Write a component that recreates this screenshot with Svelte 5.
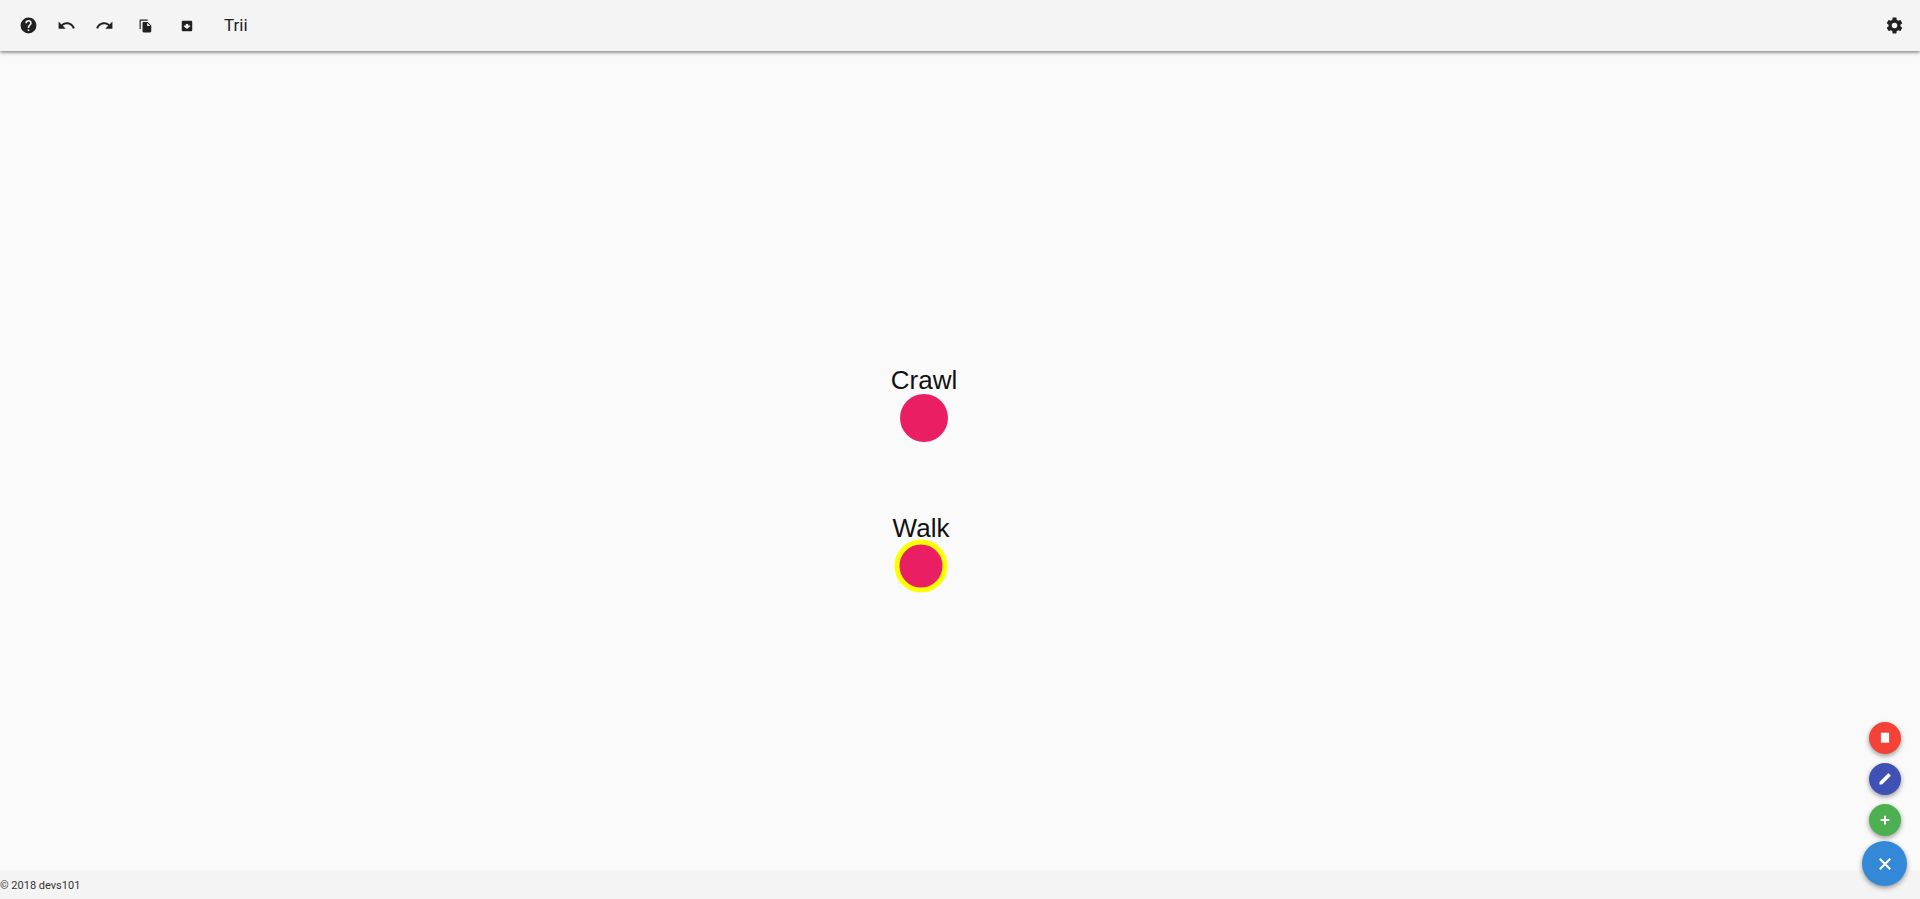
<script>
  const tools = [
    { label: 'Help', size: 19, d: 'M15.07,11.25L14.17,12.17C13.45,12.89 13,13.5 13,15H11V14.5C11,13.39 11.45,12.39 12.17,11.67L13.41,10.41C13.78,10.05 14,9.55 14,9C14,7.89 13.1,7 12,7A2,2 0 0,0 10,9H8A4,4 0 0,1 12,5A4,4 0 0,1 16,9C16,9.88 15.64,10.67 15.07,11.25M13,19H11V17H13M12,2A10,10 0 0,0 2,12A10,10 0 0,0 12,22A10,10 0 0,0 22,12C22,6.47 17.5,2 12,2Z' },
    { label: 'Undo', size: 19, d: 'M12.5,8C9.85,8 7.45,9 5.6,10.6L2,7V16H11L7.38,12.38C8.77,11.22 10.54,10.5 12.5,10.5C16.04,10.5 19.05,12.81 20.1,16L22.47,15.22C21.08,11.03 17.15,8 12.5,8Z' },
    { label: 'Redo', size: 19, d: 'M18.4,10.6C16.55,9 14.15,8 11.5,8C6.85,8 2.92,11.03 1.53,15.22L3.9,16C4.95,12.81 7.96,10.5 11.5,10.5C13.45,10.5 15.23,11.22 16.62,12.38L13,16H22V7L18.4,10.6Z' }
  ];
  const fileTools = [
    { label: 'Copy', size: 14, d: 'M15,1H3C1.9,1 1,1.9 1,3V17H3V3H15V1M15,5H8C6.9,5 6,5.9 6,7V21C6,22.1 6.9,23 8,23H19C20.1,23 21,22.1 21,21V11L15,5M14,12V6.5L19.5,12H14Z' },
    { label: 'Archive', size: 14, d: 'M5,3H19A2,2 0 0,1 21,5V19A2,2 0 0,1 19,21H5A2,2 0 0,1 3,19V5A2,2 0 0,1 5,3M10,8.5V11H6.5V12.5L12,17L17.5,12.5V11H14V8.5H10Z' }
  ];
  const gear = 'M12,15.5A3.5,3.5 0 0,1 8.5,12A3.5,3.5 0 0,1 12,8.5A3.5,3.5 0 0,1 15.5,12A3.5,3.5 0 0,1 12,15.5M19.43,12.97C19.47,12.65 19.5,12.33 19.5,12C19.5,11.67 19.47,11.34 19.43,11L21.54,9.37C21.73,9.22 21.78,8.95 21.66,8.73L19.66,5.27C19.54,5.05 19.27,4.96 19.05,5.05L16.56,6.05C16.04,5.66 15.5,5.32 14.87,5.07L14.5,2.42C14.46,2.18 14.25,2 14,2H10C9.75,2 9.54,2.18 9.5,2.42L9.13,5.07C8.5,5.32 7.96,5.66 7.44,6.05L4.95,5.05C4.73,4.96 4.46,5.05 4.34,5.27L2.34,8.73C2.21,8.95 2.27,9.22 2.46,9.37L4.57,11C4.53,11.34 4.5,11.67 4.5,12C4.5,12.33 4.53,12.65 4.57,12.97L2.46,14.63C2.27,14.78 2.21,15.05 2.34,15.27L4.34,18.73C4.46,18.95 4.73,19.03 4.95,18.95L7.44,17.94C7.96,18.34 8.5,18.68 9.13,18.93L9.5,21.58C9.54,21.82 9.75,22 10,22H14C14.25,22 14.46,21.82 14.5,21.58L14.87,18.93C15.5,18.67 16.04,18.34 16.56,17.94L19.05,18.95C19.27,19.03 19.54,18.95 19.66,18.73L21.66,15.27C21.78,15.05 21.73,14.78 21.54,14.63L19.43,12.97Z';
  const close = 'M20,6L18,4L12,10L6,4L4,6L10,12L4,18L6,20L12,14L18,20L20,18L14,12Z';
  const nodes = [
    { name: 'Crawl', x: 924, y: 367, selected: false },
    { name: 'Walk', x: 921, y: 515, selected: true }
  ];
  const actions = [
    { label: 'Delete', tone: 'red', d: 'M5,3H19V20H5Z' },
    { label: 'Edit', tone: 'indigo', d: 'M21.2,7.2C21.8,6.6 21.8,5.8 21.2,5.2L18.8,2.8C18.2,2.2 17.4,2.2 16.8,2.8L14.5,5.1L18.9,9.5M2.5,17V21.5H7L18.9,9.5L14.5,5.1L2.5,17Z' },
    { label: 'Add', tone: 'green', d: 'M19.5,13.7H13.7V19.5H10.3V13.7H4.5V10.3H10.3V4.5H13.7V10.3H19.5V13.7Z' }
  ];
</script>

{#snippet icon(d, size)}
  <svg viewBox="0 0 24 24" width={size} height={size} aria-hidden="true"><path fill="currentColor" fill-rule="evenodd" {d} /></svg>
{/snippet}

<div class="app">
  <header>
    <div class="group">
      {#each tools as t}
        <button class="tool" aria-label={t.label}>{@render icon(t.d, t.size)}</button>
      {/each}
    </div>
    <div class="group files">
      {#each fileTools as t}
        <button class="tool" aria-label={t.label}>{@render icon(t.d, t.size)}</button>
      {/each}
    </div>
    <h1>Trii</h1>
    <button class="tool settings" aria-label="Settings">{@render icon(gear, 19)}</button>
  </header>

  <main>
    <svg class="canvas" role="img" aria-label="Tree">
      {#each nodes as n}
        <g transform="translate({n.x} {n.y})">
          <circle r="24" class:selected={n.selected} />
          <text y="-29">{n.name}</text>
        </g>
      {/each}
    </svg>
  </main>

  <footer>© 2018 devs101</footer>

  <div class="dial">
    {#each actions as a}
      <button class="fab {a.tone}" aria-label={a.label}>{@render icon(a.d, 14)}</button>
    {/each}
    <button class="fab main" aria-label="Close">{@render icon(close, 18)}</button>
  </div>
</div>

<style>
  :global(body) {
    margin: 0;
  }
  .app {
    display: flex;
    flex-direction: column;
    height: 100vh;
    background: #fafafa;
    color: #212121;
    font-family: Roboto, sans-serif;
  }
  header {
    position: relative;
    display: flex;
    align-items: center;
    height: 51px;
    padding: 0 16px 0 18px;
    box-sizing: border-box;
    background: #f4f4f4;
    box-shadow: 0 1px 4px rgba(0, 0, 0, 0.6);
  }
  .group {
    display: flex;
    gap: 17px;
  }
  .files {
    gap: 21px;
    margin-left: 21px;
  }
  button {
    display: flex;
    align-items: center;
    justify-content: center;
    padding: 0;
    border: 0;
    background: none;
    color: inherit;
    cursor: pointer;
  }
  .tool {
    width: 20px;
    height: 20px;
  }
  .group:not(.files) .tool {
    width: 21px;
  }
  h1 {
    margin: 0 0 0 27px;
    font-size: 17px;
    font-weight: 400;
    line-height: 21px;
  }
  .settings {
    margin-left: auto;
  }
  main {
    flex: 1;
    min-height: 0;
  }
  .canvas {
    display: block;
    width: 100%;
    height: 100%;
  }
  circle {
    fill: #e91e63;
  }
  circle.selected {
    stroke: #ffff00;
    stroke-width: 5px;
  }
  text {
    fill: #111;
    font: 26px "Liberation Sans", Arial, sans-serif;
    text-anchor: middle;
  }
  footer {
    padding: 7px 0 4px;
    background: #f4f4f4;
    color: #333;
    font-size: 11px;
    line-height: 18px;
  }
  .dial {
    position: fixed;
    right: 13px;
    bottom: 13px;
    display: flex;
    flex-direction: column;
    align-items: center;
    gap: 9px;
  }
  .fab {
    width: 32px;
    height: 32px;
    border-radius: 50%;
    color: #fff;
    box-shadow: 0 2px 5px rgba(0, 0, 0, 0.4);
  }
  .red {
    background: #f44336;
  }
  .indigo {
    background: #3f51b5;
  }
  .green {
    background: #4caf50;
  }
  .main {
    width: 45px;
    height: 45px;
    margin-top: -4px;
    background: #3388d8;
  }
</style>
